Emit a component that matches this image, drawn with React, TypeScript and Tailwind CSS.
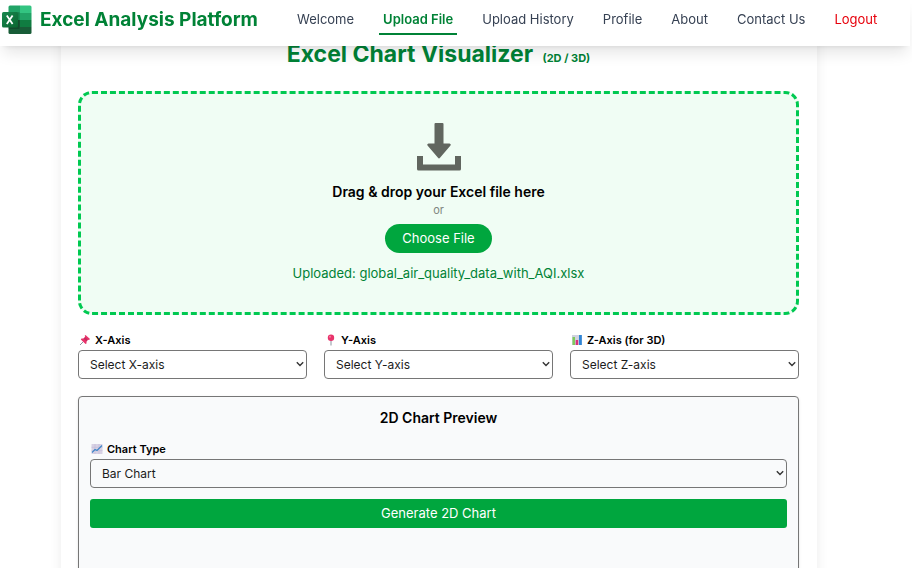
import { useState } from "react";
import type { ReactNode } from "react";

function ExcelLogo() {
  return (
    <svg viewBox="0 0 30 30" className="h-[30px] w-[30px] shrink-0" aria-hidden="true">
      <defs>
        <clipPath id="book">
          <rect x="6.500" y="0.500" width="23" height="28.500" rx="1.500" />
        </clipPath>
        <linearGradient id="tile" x1="0" y1="0" x2="1" y2="1">
          <stop offset="0" stopColor="#18884f" />
          <stop offset="1" stopColor="#0b6631" />
        </linearGradient>
      </defs>
      <g clipPath="url(#book)">
        <rect x="6" y="0" width="12" height="8" fill="#21a366" />
        <rect x="18" y="0" width="12" height="8" fill="#33c481" />
        <rect x="6" y="8" width="12" height="7" fill="#1b9a5b" />
        <rect x="18" y="8" width="12" height="7" fill="#21a366" />
        <rect x="6" y="15" width="12" height="14" fill="#185c37" />
        <rect x="18" y="15" width="12" height="7" fill="#107c41" />
        <rect x="18" y="22" width="12" height="7" fill="#185c37" />
        <rect x="6" y="7" width="11.500" height="17" fill="#000" opacity="0.18" />
      </g>
      <rect x="0" y="7" width="16" height="15.500" rx="1.500" fill="url(#tile)" />
      <path d="M4.800 10.500 L10.600 19 M10.600 10.500 L4.800 19" stroke="#fff" strokeWidth="1.800" fill="none" />
    </svg>
  );
}

function DownloadIcon() {
  return (
    <svg viewBox="0 0 44 48" className="h-12 w-11" fill="#61665f" aria-hidden="true">
      <path d="M18.500 0h7a1 1 0 0 1 1 1v19.500h6q2 0.500 1 2L23 34.800q-1 1.200-2 0L10.500 22.500q-1-1.500 1-2h6V1a1 1 0 0 1 1-1z" />
      <path d="M0 33h6v8.500h32V33h6v13a1.500 1.500 0 0 1-1.500 1.500h-41A1.500 1.500 0 0 1 0 46z" />
    </svg>
  );
}

function PushpinIcon() {
  return (
    <svg viewBox="0 0 12 12" className="h-3 w-3" aria-hidden="true">
      <path d="M1 11 L4.500 7.500" stroke="#8b93a0" strokeWidth="1" />
      <path d="M6.500 1 L11 5 L10 6 L8.800 5.800 L7.500 7.500 L7.500 9.500 L6.500 10 L1.800 5.500 L2.500 4.500 L4.500 4.600 L6.200 3 L5.700 1.700 Z" fill="#e8336b" />
      <path d="M6.200 3 L8.800 5.800 L7.500 7.500 L4.500 4.600 Z" fill="#c92a5e" />
    </svg>
  );
}

function RoundPinIcon() {
  return (
    <svg viewBox="0 0 12 12" className="h-3 w-3" aria-hidden="true">
      <path d="M6 6v5.500" stroke="#8b93a0" strokeWidth="1" />
      <circle cx="6" cy="3.700" r="3.200" fill="#e8336b" />
      <circle cx="5" cy="2.700" r="1" fill="#f77ba0" />
    </svg>
  );
}

function BarsIcon() {
  return (
    <svg viewBox="0 0 12 12" className="h-3 w-3" aria-hidden="true">
      <rect x="1" y="1" width="10" height="10" fill="#d0d2e0" />
      <rect x="1.500" y="3" width="2.500" height="8" fill="#7fc95c" />
      <rect x="4.700" y="6" width="2.500" height="5" fill="#d8327a" />
      <rect x="8" y="1" width="2.800" height="10" fill="#2f86d6" />
    </svg>
  );
}

function TrendIcon() {
  return (
    <svg viewBox="0 0 12 12" className="h-3 w-3" aria-hidden="true">
      <rect x="0.500" y="1" width="11" height="10" rx="0.500" fill="#d8d2e4" />
      <path d="M0.500 4.300h11M0.500 7.600h11M4 1v10M8 1v10" stroke="#c3bbd6" strokeWidth="0.600" />
      <path d="M1 9.500 L4 6.500 L6 7.500 L11 2.500" stroke="#3f86c8" strokeWidth="1.200" fill="none" />
    </svg>
  );
}

function Chevron() {
  return (
    <svg
      viewBox="0 0 8 6"
      className="pointer-events-none absolute top-[11px] right-[3px] h-1.5 w-2"
      fill="none"
      stroke="#333333"
      strokeWidth="1.400"
      aria-hidden="true"
    >
      <path d="M0.800 1.200 L4 4.400 L7.200 1.200" />
    </svg>
  );
}

const links = ["Welcome", "Upload File", "Upload History", "Profile", "About", "Contact Us"];

function Header() {
  return (
    <header className="fixed inset-x-0 top-0 z-10 mr-0.5 flex h-[46px] items-center bg-white pl-0.5 shadow-lg">
      <div className="flex w-[291px] shrink-0 items-center gap-2 pb-1.5">
        <ExcelLogo />
        <span className="text-[19px] leading-6 font-bold whitespace-nowrap text-[#008236]">
          Excel Analysis Platform
        </span>
      </div>
      <nav className="mb-1.5 flex gap-[21px] text-[13px] leading-5 whitespace-nowrap text-[#364153]">
        {links.map((name) => (
          <a
            key={name}
            href="#"
            className={
              name === "Upload File"
                ? "border-b-2 border-[#008236] px-1 pt-1 pb-1 font-semibold text-[#008236]"
                : "border-b-2 border-transparent px-1 pt-1 pb-1"
            }
          >
            {name}
          </a>
        ))}
        <button type="button" className="flex px-1 pt-1 text-[#e7000b]">
          Logout
        </button>
      </nav>
    </header>
  );
}

type FieldProps = {
  id: string;
  label: string;
  icon: ReactNode;
  options: string[];
};

function SelectField({ id, label, icon, options }: FieldProps) {
  const [value, setValue] = useState(options[0]);
  return (
    <div>
      <label htmlFor={id} className="flex h-5 items-center gap-1 pl-px text-[11px] leading-4 font-semibold">
        {icon}
        {label}
      </label>
      <div className="relative">
        <select
          id={id}
          value={value}
          onChange={(e) => setValue(e.target.value)}
          className="block h-[29px] w-full appearance-none rounded-[4px] border border-[#767676] px-[11px] text-[12px] text-[#1c1c1c]"
        >
          {options.map((o) => (
            <option key={o}>{o}</option>
          ))}
        </select>
        <Chevron />
      </div>
    </div>
  );
}

export default function App() {
  return (
    <div className="h-screen overflow-hidden bg-white font-['Inter','Liberation_Sans',sans-serif] text-black">
      <Header />
      <main className="mr-[95px] ml-[61px] bg-white pt-[42px] pr-[18px] pb-5 pl-[17px] shadow-[0_0_12px_rgba(0,0,0,0.08)]">
        <h1 className="text-center text-[23px] leading-6 font-bold text-[#008236]">
          Excel Chart Visualizer <span className="ml-1 text-[11px]">(2D / 3D)</span>
        </h1>

        <section className="mt-[21px] flex h-[224px] flex-col items-center rounded-[14px] border-3 border-dashed border-[#00c951] bg-[#f0fdf4] pt-[29px]">
          <DownloadIcon />
          <p className="mt-[9px] text-[14px] leading-6 font-semibold">Drag &amp; drop your Excel file here</p>
          <p className="text-[11px] leading-3 text-[#808680]">or</p>
          <button type="button" className="mt-2 h-[29px] rounded-full bg-[#00a63e] px-[17px] text-[13px] text-white">
            Choose File
          </button>
          <p className="mt-2.5 text-[13px] leading-5 text-[#008236]">
            Uploaded: global_air_quality_data_with_AQI.xlsx
          </p>
        </section>

        <div className="mt-[15px] grid grid-cols-3 gap-[17px]">
          <SelectField id="x-axis" label="X-Axis" icon={<PushpinIcon />} options={["Select X-axis"]} />
          <SelectField id="y-axis" label="Y-Axis" icon={<RoundPinIcon />} options={["Select Y-axis"]} />
          <SelectField id="z-axis" label="Z-Axis (for 3D)" icon={<BarsIcon />} options={["Select Z-axis"]} />
        </div>

        <section className="mt-[17px] h-[400px] rounded-[4px] border border-[#767676] bg-[#f9fafb] px-[11px] pt-[11px] shadow-sm">
          <h2 className="text-center text-[14px] leading-5 font-semibold">2D Chart Preview</h2>
          <div className="mt-[11px]">
            <SelectField
              id="chart-type"
              label="Chart Type"
              icon={<TrendIcon />}
              options={["Bar Chart", "Line Chart", "Pie Chart"]}
            />
          </div>
          <button type="button" className="mt-[11px] h-[29px] w-full rounded-[3px] bg-[#00a63e] text-[13px] text-white">
            Generate 2D Chart
          </button>
        </section>
      </main>
    </div>
  );
}
